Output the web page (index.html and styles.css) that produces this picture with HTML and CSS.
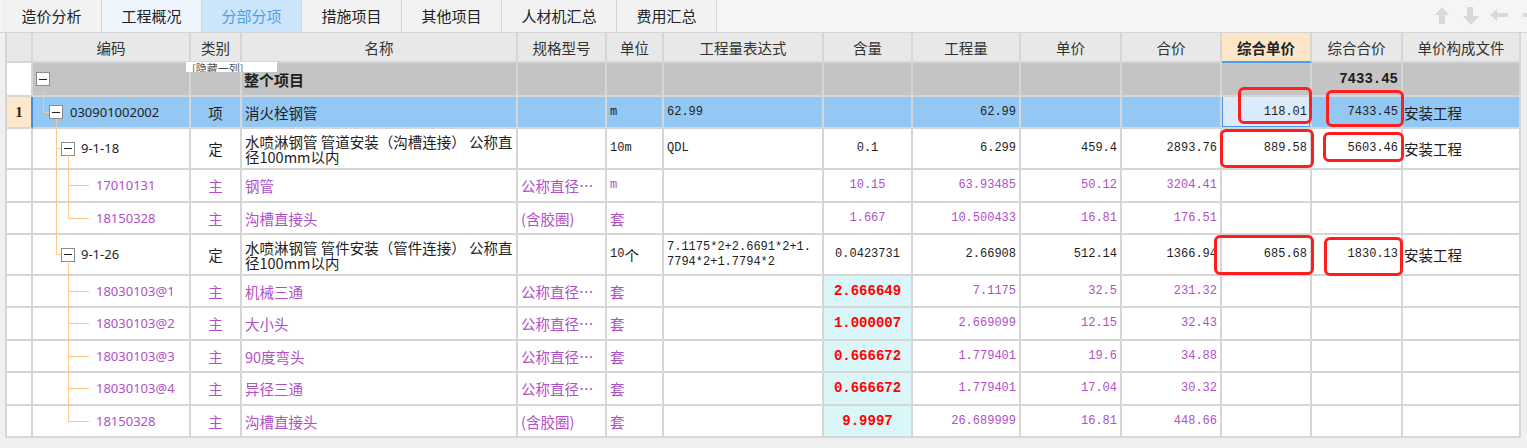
FILE: index.html
```html
<!DOCTYPE html>
<html lang="zh-CN">
<head>
<meta charset="utf-8">
<title>分部分项</title>
<link rel="stylesheet" href="styles.css">
</head>
<body>
<div class="tabs">
  <div class="tab">造价分析</div>
  <div class="tab soft">工程概况</div>
  <div class="tab on">分部分项</div>
  <div class="tab">措施项目</div>
  <div class="tab">其他项目</div>
  <div class="tab wide">人材机汇总</div>
  <div class="tab">费用汇总</div>
  <svg class="tools" width="92" height="32" viewBox="0 0 92 32">
    <polygon points="7,7 14,15 10,15 10,24 4,24 4,15 0,15" fill="#d9d9d9"/>
    <polygon points="32,7 38,7 38,16 44,16 36,25 28,16 32,16" fill="#d9d9d9"/>
    <polygon points="55,15 62,9 62,13 73,13 73,17 62,17 62,21" fill="#d9d9d9"/>
    <rect x="88" y="13" width="4" height="4" fill="#d9d9d9"/>
  </svg>
</div>

<div class="sheet">
  <div class="row head h30">
    <div class="c"></div>
    <div class="c">编码</div>
    <div class="c">类别</div>
    <div class="c">名称</div>
    <div class="c">规格型号</div>
    <div class="c">单位</div>
    <div class="c">工程量表达式</div>
    <div class="c">含量</div>
    <div class="c">工程量</div>
    <div class="c">单价</div>
    <div class="c">合价</div>
    <div class="c hl">综合单价</div>
    <div class="c">综合合价</div>
    <div class="c">单价构成文件</div>
  </div>

  <div class="row total h34">
    <div class="c rn"></div>
    <div class="c lv0"><span class="tb"></span></div>
    <div class="c"></div>
    <div class="c bold">整个项目</div>
    <div class="c"></div>
    <div class="c"></div>
    <div class="c"></div>
    <div class="c"></div>
    <div class="c"></div>
    <div class="c"></div>
    <div class="c"></div>
    <div class="c"></div>
    <div class="c r n b14">7433.45</div>
    <div class="c"></div>
  </div>

  <div class="row sel h32">
    <div class="c rn m">1</div>
    <div class="c lv1"><span class="tb"></span><span class="code">030901002002</span></div>
    <div class="c m">项</div>
    <div class="c">消火栓钢管</div>
    <div class="c"></div>
    <div class="c n">m</div>
    <div class="c n">62.99</div>
    <div class="c"></div>
    <div class="c r n">62.99</div>
    <div class="c"></div>
    <div class="c"></div>
    <div class="c r n cur">118.01</div>
    <div class="c r n">7433.45</div>
    <div class="c fl">安装工程</div>
  </div>

  <div class="row h41">
    <div class="c rn"></div>
    <div class="c lv2"><span class="tb"></span><span class="code">9-1-18</span></div>
    <div class="c m">定</div>
    <div class="c"><span class="two">水喷淋钢管 管道安装（沟槽连接） 公称直<br>径100mm以内</span></div>
    <div class="c"></div>
    <div class="c n">10m</div>
    <div class="c n">QDL</div>
    <div class="c m n">0.1</div>
    <div class="c r n">6.299</div>
    <div class="c r n">459.4</div>
    <div class="c r n">2893.76</div>
    <div class="c r n">889.58</div>
    <div class="c r n">5603.46</div>
    <div class="c fl">安装工程</div>
  </div>

  <div class="row mat h33">
    <div class="c rn"></div>
    <div class="c lv3"><span class="code">17010131</span></div>
    <div class="c m">主</div>
    <div class="c">钢管</div>
    <div class="c">公称直径…</div>
    <div class="c n">m</div>
    <div class="c"></div>
    <div class="c m n">10.15</div>
    <div class="c r n">63.93485</div>
    <div class="c r n">50.12</div>
    <div class="c r n">3204.41</div>
    <div class="c"></div>
    <div class="c"></div>
    <div class="c"></div>
  </div>

  <div class="row mat h32">
    <div class="c rn"></div>
    <div class="c lv3"><span class="code">18150328</span></div>
    <div class="c m">主</div>
    <div class="c">沟槽直接头</div>
    <div class="c">(含胶圈)</div>
    <div class="c">套</div>
    <div class="c"></div>
    <div class="c m n">1.667</div>
    <div class="c r n">10.500433</div>
    <div class="c r n">16.81</div>
    <div class="c r n">176.51</div>
    <div class="c"></div>
    <div class="c"></div>
    <div class="c"></div>
  </div>

  <div class="row h41">
    <div class="c rn"></div>
    <div class="c lv2"><span class="tb"></span><span class="code">9-1-26</span></div>
    <div class="c m">定</div>
    <div class="c"><span class="two">水喷淋钢管 管件安装（管件连接） 公称直<br>径100mm以内</span></div>
    <div class="c"></div>
    <div class="c"><span class="n">10</span>个</div>
    <div class="c n"><span class="two">7.1175*2+2.6691*2+1.<br>7794*2+1.7794*2</span></div>
    <div class="c m n">0.0423731</div>
    <div class="c r n">2.66908</div>
    <div class="c r n">512.14</div>
    <div class="c r n">1366.94</div>
    <div class="c r n">685.68</div>
    <div class="c r n">1830.13</div>
    <div class="c fl">安装工程</div>
  </div>

  <div class="row mat h32">
    <div class="c rn"></div>
    <div class="c lv3"><span class="code">18030103@1</span></div>
    <div class="c m">主</div>
    <div class="c">机械三通</div>
    <div class="c">公称直径…</div>
    <div class="c">套</div>
    <div class="c"></div>
    <div class="c m n b14 red">2.666649</div>
    <div class="c r n">7.1175</div>
    <div class="c r n">32.5</div>
    <div class="c r n">231.32</div>
    <div class="c"></div>
    <div class="c"></div>
    <div class="c"></div>
  </div>

  <div class="row mat h33">
    <div class="c rn"></div>
    <div class="c lv3"><span class="code">18030103@2</span></div>
    <div class="c m">主</div>
    <div class="c">大小头</div>
    <div class="c">公称直径…</div>
    <div class="c">套</div>
    <div class="c"></div>
    <div class="c m n b14 red">1.000007</div>
    <div class="c r n">2.669099</div>
    <div class="c r n">12.15</div>
    <div class="c r n">32.43</div>
    <div class="c"></div>
    <div class="c"></div>
    <div class="c"></div>
  </div>

  <div class="row mat h32">
    <div class="c rn"></div>
    <div class="c lv3"><span class="code">18030103@3</span></div>
    <div class="c m">主</div>
    <div class="c">90度弯头</div>
    <div class="c">公称直径…</div>
    <div class="c">套</div>
    <div class="c"></div>
    <div class="c m n b14 red">0.666672</div>
    <div class="c r n">1.779401</div>
    <div class="c r n">19.6</div>
    <div class="c r n">34.88</div>
    <div class="c"></div>
    <div class="c"></div>
    <div class="c"></div>
  </div>

  <div class="row mat h33">
    <div class="c rn"></div>
    <div class="c lv3"><span class="code">18030103@4</span></div>
    <div class="c m">主</div>
    <div class="c">异径三通</div>
    <div class="c">公称直径…</div>
    <div class="c">套</div>
    <div class="c"></div>
    <div class="c m n b14 red">0.666672</div>
    <div class="c r n">1.779401</div>
    <div class="c r n">17.04</div>
    <div class="c r n">30.32</div>
    <div class="c"></div>
    <div class="c"></div>
    <div class="c"></div>
  </div>

  <div class="row mat h32">
    <div class="c rn"></div>
    <div class="c lv3"><span class="code">18150328</span></div>
    <div class="c m">主</div>
    <div class="c">沟槽直接头</div>
    <div class="c">(含胶圈)</div>
    <div class="c">套</div>
    <div class="c"></div>
    <div class="c m n b14 red">9.9997</div>
    <div class="c r n">26.689999</div>
    <div class="c r n">16.81</div>
    <div class="c r n">448.66</div>
    <div class="c"></div>
    <div class="c"></div>
    <div class="c"></div>
  </div>

  <svg class="tree" width="1514" height="405" viewBox="7 33 1514 405">
    <g fill="none" stroke="#fcc88a" stroke-width="1">
      <path d="M43.5 86 V112.5 H49"/>
      <path d="M56.5 119 V254.5 H61 M56.5 148.5 H61"/>
      <path d="M68.5 155 V218.5 H89 M68.5 185.5 H89"/>
      <path d="M68.5 261 V421.5 H89 M68.5 291.5 H89 M68.5 323.5 H89 M68.5 356.5 H89 M68.5 388.5 H89"/>
    </g>
  </svg>

  <div class="tip">[隐藏一列]</div>

  <div class="mk m1"></div>
  <div class="mk m2"></div>
  <div class="mk m3"></div>
  <div class="mk m4"></div>
  <div class="mk m5"></div>
  <div class="mk m6"></div>
</div>
</body>
</html>
```

FILE: styles.css
```css
html, body {
  margin: 0;
  padding: 0;
}
body {
  width: 1527px;
  height: 448px;
  overflow: hidden;
  background: #f0f0f0;
  font-family: "Noto Sans CJK SC", "Noto Sans", sans-serif;
  color: #1e1e1e;
}

/* ---------- tabs ---------- */
.tabs {
  display: flex;
  height: 32px;
  padding-left: 2px;
  border-bottom: 1px solid #d4d4d4;
  background: #f5f5f5;
}
.tab {
  width: 100px;
  box-sizing: border-box;
  border-right: 1px solid #d6d6d6;
  display: flex;
  align-items: center;
  justify-content: center;
  font-size: 15px;
  line-height: 16px;
  color: #222;
  background: #f2f2f2;
}
.tab.wide { width: 115px; }
.tab.soft { background: #eef5fc; }
.tab.on { background: #cde5fa; color: #4c9fe5; }
.tools { margin-left: auto; display: block; }

/* ---------- sheet ---------- */
.sheet {
  position: relative;
  width: 1514px;
  margin-left: 5px;
  border-left: 2px solid #d6d6d6;
  background: #fff;
}
.row {
  display: grid;
  grid-template-columns: 26px 158px 51px 276px 89px 57px 160px 89px 108px 101px 100px 90px 91px 118px;
}
.h30 { height: 30px; }
.h32 { height: 32px; }
.h33 { height: 33px; }
.h34 { height: 34px; }
.h41 { height: 41px; }

.c {
  box-sizing: border-box;
  border-right: 2px solid #d6d6d6;
  border-bottom: 2px solid #d6d6d6;
  display: flex;
  align-items: center;
  padding: 0 3px;
  overflow: hidden;
  white-space: nowrap;
  font-size: 14.5px;
  line-height: 15px;
}
.c.r { justify-content: flex-end; }
.c.m { justify-content: center; }
.c.fl { padding-left: 1px; }
.n {
  font-family: "Liberation Mono", monospace;
  font-size: 12px;
}
.b14 {
  font-size: 14px;
  font-weight: bold;
}
.bold { font-weight: bold; font-size: 15px; padding-left: 2px; }
.two { display: block; line-height: 15px; }
.code {
  font-family: "Noto Sans", sans-serif;
  font-size: 13px;
}

/* header */
.head .c {
  justify-content: center;
  background: #e8e8e8;
  color: #333;
}
.head .c.hl {
  background: #fde6c8;
  font-weight: bold;
  color: #222;
  border-bottom-color: #4a9de8;
}

/* total row */
.total .c { background: #c4c4c4; }
.total .c.rn { background: #fff; }

/* selected row */
.sel .c { background: #93c8f4; }
.sel .c.rn {
  background: #fde8cc;
  border-right-color: #3d8fe0;
  font-family: "Liberation Serif", serif;
  font-weight: bold;
  font-size: 14px;
}
.sel .c.cur {
  background: #dcebfc;
  box-shadow: inset 1px 0 0 #4a97e8, inset 0 -1px 0 #4a97e8, inset -1px 0 0 #4a97e8;
}

/* material rows */
.mat .c { color: #b04fc6; }
.mat .c.red {
  color: #ff0000;
  background: #daf6f8;
}

/* tree */
.tb {
  flex: none;
  box-sizing: border-box;
  width: 14px;
  height: 14px;
  border: 1px solid #8c8c8c;
  background: #fff;
  display: flex;
  align-items: center;
  justify-content: center;
}
.tb::after {
  content: "";
  display: block;
  width: 8px;
  height: 1px;
  background: #222;
}
.lv0 .tb { margin-left: 0; }
.lv1 .tb { margin-left: 13px; margin-right: 7px; }
.lv2 .tb { margin-left: 25px; margin-right: 6px; }
.lv3 { padding-left: 63px; }

.tree {
  position: absolute;
  left: 0;
  top: 0;
  pointer-events: none;
}

/* tooltip remnant */
.tip {
  position: absolute;
  left: 179px;
  top: 29px;
  width: 91px;
  height: 10px;
  box-sizing: border-box;
  padding-left: 6px;
  background: #fff;
  overflow: hidden;
  font-size: 11px;
  line-height: 13px;
  color: #555;
  white-space: nowrap;
}

/* red annotation boxes */
.mk {
  position: absolute;
  box-sizing: border-box;
  border: 3px solid #ff1e1e;
  border-radius: 6px;
  pointer-events: none;
}
.m1 { left: 1231px; top: 54px; width: 74px; height: 37px; }
.m2 { left: 1319px; top: 57px; width: 78px; height: 37px; }
.m3 { left: 1213px; top: 96px; width: 94px; height: 39px; }
.m4 { left: 1316px; top: 99px; width: 81px; height: 30px; }
.m5 { left: 1207px; top: 202px; width: 100px; height: 40px; }
.m6 { left: 1317px; top: 204px; width: 79px; height: 39px; }
```
